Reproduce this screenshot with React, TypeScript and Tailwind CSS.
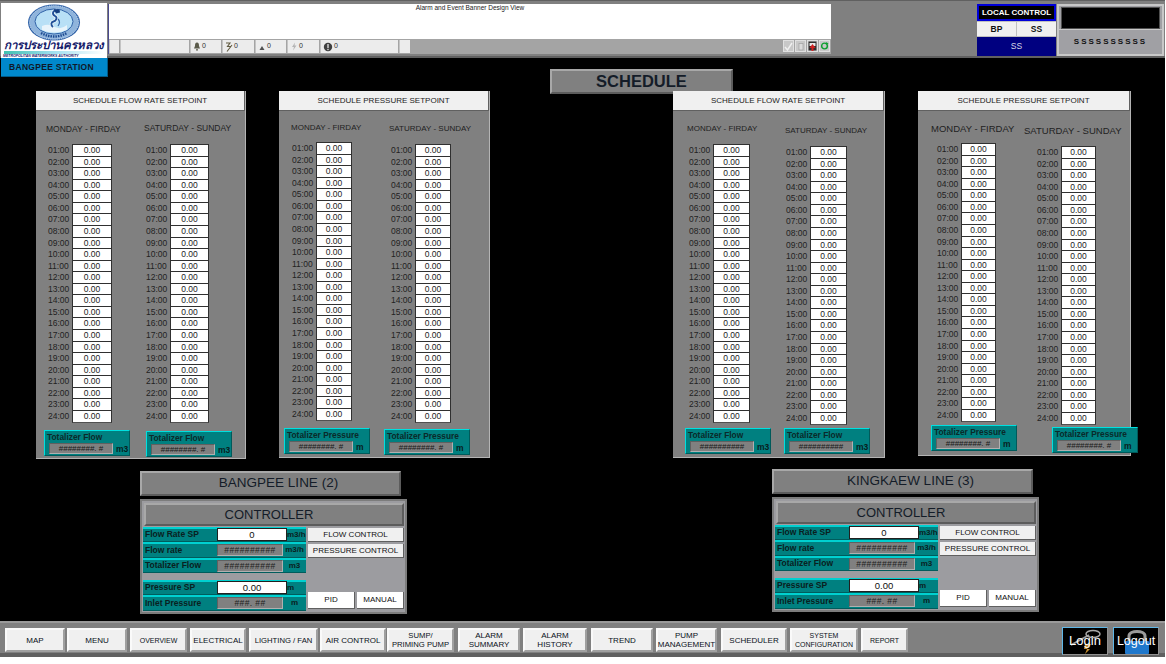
import React from "react";

const FONT = "font-['Liberation_Sans',Arial,sans-serif]";
const HOURS = Array.from({ length: 24 }, (_, i) => String(i + 1).padStart(2, "0") + ":00");

type Col = { box: string; labelCls: string; label: string; rows: string; input: string; tot: string; totLabel: string; value: string; unit: string };
type PanelCfg = { title: string; cls: string; cols: Col[] };

const FLOW = "Totalizer Flow";
const PRES = "Totalizer Pressure";
const MF = "MONDAY - FIRDAY";
const SS = "SATURDAY - SUNDAY";

const PANELS: PanelCfg[] = [
  {
    title: "SCHEDULE FLOW RATE SETPOINT",
    cls: "ml-[36px] w-[210px] h-[368px]",
    cols: [
      { box: "w-[102px] pt-[13px]", labelCls: "ml-[10px] text-[8.5px]", label: MF, rows: "ml-[12px] mt-[9px]", input: "w-[40px]", tot: "ml-[8px] mt-[8px]", totLabel: FLOW, value: "########. #", unit: "m3" },
      { box: "w-[108px] pt-[12px]", labelCls: "ml-[6px] text-[8.5px]", label: SS, rows: "ml-[8px] mt-[10px]", input: "w-[39px]", tot: "ml-[8px] mt-[9px]", totLabel: FLOW, value: "########. #", unit: "m3" },
    ],
  },
  {
    title: "SCHEDULE PRESSURE SETPOINT",
    cls: "ml-[33px] w-[211px] h-[367px]",
    cols: [
      { box: "w-[98px] pt-[12px]", labelCls: "ml-[12px] text-[8px]", label: MF, rows: "ml-[13px] mt-[8px]", input: "w-[36px]", tot: "ml-[5px] mt-[8px]", totLabel: PRES, value: "########. #", unit: "m" },
      { box: "w-[113px] pt-[13px]", labelCls: "ml-[12px] text-[8px]", label: SS, rows: "ml-[14px] mt-[9px]", input: "w-[36px]", tot: "ml-[7px] mt-[7px]", totLabel: PRES, value: "########. #", unit: "m" },
    ],
  },
  {
    title: "SCHEDULE FLOW RATE SETPOINT",
    cls: "ml-[183px] w-[212px] h-[367px]",
    cols: [
      { box: "w-[100px] pt-[13px]", labelCls: "ml-[14px] text-[8px]", label: MF, rows: "ml-[16px] mt-[9px]", input: "w-[37px]", tot: "ml-[12px] mt-[6px]", totLabel: FLOW, value: "##########", unit: "m3" },
      { box: "w-[112px] pt-[15px]", labelCls: "ml-[12px] text-[8px]", label: SS, rows: "ml-[13px] mt-[9px]", input: "w-[37px]", tot: "ml-[11px] mt-[4px]", totLabel: FLOW, value: "##########", unit: "m3" },
    ],
  },
  {
    title: "SCHEDULE PRESSURE SETPOINT",
    cls: "ml-[33px] w-[213px] h-[365px]",
    cols: [
      { box: "w-[100px] pt-[13px]", labelCls: "ml-[13px] text-[9.5px]", label: MF, rows: "ml-[19px] mt-[8px]", input: "w-[35px]", tot: "ml-[13px] mt-[4px]", totLabel: PRES, value: "########. #", unit: "m" },
      { box: "w-[113px] pt-[15px]", labelCls: "ml-[6px] text-[9.5px]", label: SS, rows: "ml-[19px] mt-[9px]", input: "w-[35px]", tot: "ml-[34px] mt-[3px]", totLabel: PRES, value: "########. #", unit: "m" },
    ],
  },
];

function Totalizer({ c }: { c: Col }) {
  return (
    <div className={`${c.tot} w-[86px] h-[26px] shrink-0 bg-[#008080] border border-t-[#00e0e0] border-l-[#00e0e0] border-r-[#005a5a] border-b-[#005a5a] flex flex-col`}>
      <div className="h-[12px] pl-[2px] text-[8.4px] font-bold leading-[12px] text-[#0a2a2a] whitespace-nowrap">{c.totLabel}</div>
      <div className="flex items-center">
        <div className="ml-[4px] w-[64px] h-[11px] bg-[#808080] border border-t-[#606060] border-l-[#606060] border-r-[#b0b0b0] border-b-[#b0b0b0] text-[8px] leading-[9px] text-center text-[#181818] whitespace-nowrap overflow-hidden">{c.value}</div>
        <div className="ml-[3px] text-[8.5px] font-semibold text-[#082020]">{c.unit}</div>
      </div>
    </div>
  );
}

function Column({ c }: { c: Col }) {
  return (
    <div className={`${c.box} flex flex-col shrink-0`}>
      <div className={`${c.labelCls} h-[12px] leading-[12px] text-[#222222] whitespace-nowrap`}>{c.label}</div>
      <div className={`${c.rows} h-[277.5px] flex flex-col`}>
        {HOURS.map((h) => (
          <div key={h} className="flex-1 flex items-stretch min-h-0">
            <div className="w-[24px] text-[8.5px] leading-[13px] text-[#222222] text-left">{h}</div>
            <div className={`${c.input} bg-white border border-[#303030] border-b-[#505050] -mb-[1px] text-[8.5px] leading-[11px] text-center text-[#222222]`}>0.00</div>
          </div>
        ))}
      </div>
      <Totalizer c={c} />
    </div>
  );
}

function Panel({ p }: { p: PanelCfg }) {
  return (
    <div className={`${p.cls} shrink-0 flex flex-col bg-[#808080] border-r border-b border-[#b4b4b4]`}>
      <div className="h-[20px] -mb-[1px] shrink-0 bg-[#f0f0f0] border-b border-r border-[#606060] text-[8px] leading-[20px] text-center text-[#222222]">{p.title}</div>
      <div className="flex">
        {p.cols.map((c) => (
          <Column key={c.box + c.label} c={c} />
        ))}
      </div>
    </div>
  );
}

function Plate({ cls, text }: { cls: string; text: string }) {
  return (
    <div className={`${cls} bg-[#808080] border-2 border-t-[#a8a8a8] border-l-[#a8a8a8] border-r-[#5c5c5c] border-b-[#5c5c5c] flex items-center justify-center text-[#141c28]`}>{text}</div>
  );
}

function TealRow({ label, input, value, unit, cls }: { label: string; input?: string; value?: string; unit: string; cls: string }) {
  return (
    <div className={`${cls} flex items-center bg-[#008080] border-t-2 border-t-[#00d0d0] border-b border-b-[#005c5c] pb-[1px] text-[8.5px] font-bold text-[#0a2020]`}>
      <div className="w-[74px] pl-[2px] whitespace-nowrap">{label}</div>
      {input ? (
        <div className="w-[70px] h-[13px] bg-white border border-[#202020] text-[9.5px] font-normal text-center leading-[11px] text-[#101010]">{input}</div>
      ) : (
        <div className="w-[66px] h-[12px] bg-[#808080] border border-t-[#606060] border-l-[#606060] border-r-[#b0b0b0] border-b-[#b0b0b0] text-[8.5px] font-normal text-center leading-[10px] tracking-[0.4px] text-[#202020] whitespace-nowrap overflow-hidden">{value}</div>
      )}
      <div className={input ? "ml-0 text-[8px]" : "flex-1 text-center text-[8px]"}>{unit}</div>
    </div>
  );
}

function LightBtn({ cls, text }: { cls: string; text: string }) {
  return (
    <div className={`${cls} flex items-center justify-center text-[8px] text-[#101010] whitespace-nowrap border-r border-b border-[#606060]`}>{text}</div>
  );
}

function Controller({ cls }: { cls: string }) {
  return (
    <div className={`${cls} h-[115px] bg-[#9c9ca0] border-2 border-[#7c7c7c] flex flex-col pl-[1px] pt-[2px]`}>
      <Plate cls="ml-[1px] w-[260px] h-[23px] text-[13px] pr-[10px]" text="CONTROLLER" />
      <div className="flex mt-[1px]">
        <div className="w-[163px] flex flex-col">
          <TealRow cls="h-[15px]" label="Flow Rate SP" input="0" unit="m3/h" />
          <TealRow cls="h-[16px]" label="Flow rate" value="##########" unit="m3/h" />
          <TealRow cls="h-[15px]" label="Totalizer Flow" value="##########" unit="m3" />
          <div className="h-[7px]" />
          <TealRow cls="h-[15px]" label="Pressure SP" input="0.00" unit="m" />
          <TealRow cls="h-[16px]" label="Inlet Pressure" value="###. ##" unit="m" />
        </div>
        <div className="ml-[2px] w-[96px] flex flex-col">
          <LightBtn cls="mt-[1px] h-[14px] bg-[#f0f0f0]" text="FLOW CONTROL" />
          <LightBtn cls="mt-[2px] h-[14px] bg-[#f0f0f0]" text="PRESSURE CONTROL" />
          <div className="mt-[34px] flex gap-[2px]">
            <LightBtn cls="w-[47px] h-[17px] bg-white" text="PID" />
            <LightBtn cls="w-[47px] h-[17px] bg-white" text="MANUAL" />
          </div>
        </div>
      </div>
    </div>
  );
}

function Seal() {
  return (
    <svg width="54" height="37" viewBox="0 0 54 37" className="block">
      <ellipse cx="27" cy="18.5" rx="26" ry="18" fill="#2f62a8" />
      <ellipse cx="27" cy="18.5" rx="24.5" ry="16.8" fill="#8fb4dc" stroke="#dfeaf6" strokeWidth="0.8" strokeDasharray="1.2 1" />
      <ellipse cx="27" cy="17.5" rx="19" ry="12.5" fill="#b8e0f6" stroke="#2f62a8" strokeWidth="1" />
      <path d="M14 29 Q27 36 40 29" fill="none" stroke="#1d4a90" strokeWidth="2.4" strokeDasharray="1.5 1" />
      <path d="M15 22 Q22 19 28 23 Q34 26 40 21 L40 26 Q27 31 15 26Z" fill="#e8f4fb" />
      <path d="M30 6.5 C25 6.5 25 10.5 28 12 C31 13.5 29 17 26.5 17.5 C24 18 23.5 21 26 23" fill="none" stroke="#e8f4fb" strokeWidth="3.6" />
      <path d="M30 6.5 C25 6.5 25 10.5 28 12 C31 13.5 29 17 26.5 17.5 C24 18 23.5 21 26 23" fill="none" stroke="#1f4f98" strokeWidth="1.8" />
      <path d="M26.5 5 L32.5 5.5 L33 8.5 L29 9.5 Z" fill="#153e80" />
      <path d="M31 15 Q34 18 31 22" fill="none" stroke="#2f62a8" strokeWidth="1.2" />
    </svg>
  );
}

function Logo() {
  return (
    <div className="w-[106px] h-[55px] bg-white flex flex-col items-center overflow-hidden">
      <div className="mt-[1px]"><Seal /></div>
      <div className="w-full h-[9px] text-[11.5px] leading-[8px] font-bold italic text-center text-[#16206a] whitespace-nowrap font-['Noto_Sans','DejaVu_Sans',sans-serif]">การประปานครหลวง</div>
      <div className="w-[100px] h-[3px] mt-[1px] bg-[linear-gradient(90deg,#40c0b0,#a0e0f0,#ffffff)]" />
      <div className="w-full text-[3.5px] leading-[4px] pl-[2px] font-bold italic text-[#16206a] whitespace-nowrap">METROPOLITAN WATERWORKS AUTHORITY</div>
    </div>
  );
}

function StatusCell({ cls, icon, n }: { cls: string; icon?: React.ReactNode; n?: string }) {
  return (
    <div className={`${cls} h-full bg-[#ececec] border-l border-[#c4c4c4] flex items-center text-[7px] text-[#303030]`}>
      {icon && <span className="ml-[2px] mr-[1px] flex">{icon}</span>}
      {n}
    </div>
  );
}

const BellIcon = (
  <svg width="8" height="9" viewBox="0 0 8 9"><path d="M4 0.5 C2.4 0.5 2 2 2 4 L1 6.5 H7 L6 4 C6 2 5.6 0.5 4 0.5Z M3 7.2 H5 V8.4 H3Z" fill="#5a5a4a" /></svg>
);
const AckIcon = (
  <svg width="8" height="10" viewBox="0 0 8 10"><path d="M1 1 H5 L2.5 4.5 H6 M7 3 L2 9.5" fill="none" stroke="#605a40" strokeWidth="1.1" /></svg>
);
const TriIcon = (
  <svg width="8" height="9" viewBox="0 0 8 9"><path d="M4 4 L6.5 8 H1.5Z" fill="#505050" /></svg>
);
const BoltIcon = (
  <svg width="8" height="9" viewBox="0 0 8 9"><path d="M5 0.5 L2 5 H4 L3 8.5 L6.5 3.5 H4.5Z" fill="#b4b4b4" /></svg>
);
const DiscIcon = (
  <svg width="10" height="10" viewBox="0 0 10 10"><circle cx="5" cy="5" r="4.2" fill="#404040" /><rect x="4.2" y="2" width="1.6" height="4" fill="#c8c8c8" /><rect x="4.2" y="6.8" width="1.6" height="1.3" fill="#c8c8c8" /></svg>
);

function ToolIcon({ children }: { children: React.ReactNode }) {
  return <div className="w-[11px] h-[12px] bg-[#c8c8c8] border border-[#e0e0e0] flex items-center justify-center">{children}</div>;
}

function Header() {
  return (
    <div className="h-[58px] bg-[#808080] flex pt-[2px] border-t border-t-[#606060] border-b-2 border-b-[#606060]">
      <div className="ml-[1px] h-[55px]"><Logo /></div>
      <div className="ml-[1px] mt-[1px] w-[723px] h-[50px] bg-[#a4a4a4] flex flex-col border-l border-[#4a4a90]">
        <div className="h-[35px] bg-white text-[6.5px] text-center leading-[8px] text-[#222222]">Alarm and Event Banner Design View</div>
        <div className="h-[13px] mt-[1px] flex items-stretch">
          <StatusCell cls="w-[10px]" />
          <StatusCell cls="ml-[1px] w-[69px]" />
          <StatusCell cls="ml-[1px] w-[31px]" icon={BellIcon} n="0" />
          <StatusCell cls="ml-[1px] w-[32px]" icon={AckIcon} n="0" />
          <StatusCell cls="ml-[1px] w-[31px]" icon={TriIcon} n="0" />
          <StatusCell cls="ml-[1px] w-[32px]" icon={BoltIcon} n="0" />
          <StatusCell cls="ml-[1px] w-[78px]" icon={DiscIcon} n="0" />
          <StatusCell cls="ml-[1px] w-[11px]" />
          <div className="flex-1" />
          <div className="flex gap-[1px] pr-[1px]">
            <ToolIcon>
              <svg width="9" height="9" viewBox="0 0 9 9"><path d="M1 5 L3.5 8 L8 1" fill="none" stroke="#f0f0f0" strokeWidth="1.4" /></svg>
            </ToolIcon>
            <ToolIcon>
              <svg width="8" height="9" viewBox="0 0 8 9"><rect x="2" y="1.5" width="4" height="6.5" fill="#dcdcdc" stroke="#a0a0a0" strokeWidth="0.7" /></svg>
            </ToolIcon>
            <ToolIcon>
              <svg width="9" height="10" viewBox="0 0 9 10"><rect x="0.5" y="0.5" width="8" height="9" fill="#303030" /><rect x="1.5" y="2" width="6" height="3" fill="#e8e8e8" /><path d="M4.5 3 L7.5 7 H5.5 V10 H3.5 V7 H1.5Z" fill="#d02020" /></svg>
            </ToolIcon>
            <ToolIcon>
              <svg width="10" height="10" viewBox="0 0 10 10"><circle cx="5" cy="5" r="3.2" fill="none" stroke="#10a030" strokeWidth="1.6" /><path d="M7 0.5 L9.5 2.5 L6.5 3.5Z" fill="#10a030" /></svg>
            </ToolIcon>
          </div>
        </div>
      </div>
      <div className="ml-[146px] mt-[1px] w-[79px] h-[52px] flex flex-col bg-[#c0c0c0]">
        <div className="h-[17px] bg-black border-2 border-[#0000d8] text-[8px] font-bold leading-[13px] text-center text-white whitespace-nowrap">LOCAL CONTROL</div>
        <div className="h-[14px] mt-[1px] flex gap-[1px]">
          <div className="flex-1 bg-[#f0f0f0] text-[8.5px] font-bold text-center leading-[14px] text-[#101010]">BP</div>
          <div className="flex-1 bg-[#f0f0f0] text-[8.5px] font-bold text-center leading-[14px] text-[#101010]">SS</div>
        </div>
        <div className="flex-1 mt-[1px] bg-[#000080] text-[8.5px] text-center leading-[19px] text-[#d8d8e8]">SS</div>
      </div>
      <div className="ml-[1px] mt-[1px] w-[107px] h-[52px] bg-[#a0a0a4] border-2 border-[#c8c8c8] flex flex-col">
        <div className="h-[22px] mx-[2px] mt-[1px] bg-black border border-[#505050]" />
        <div className="flex-1 flex items-center justify-center text-[8px] font-bold tracking-[2px] text-[#101010] whitespace-nowrap border-t border-[#c8c8c8]">SSSSSSSSSS</div>
      </div>
    </div>
  );
}

const NAV: { cls: string; text: React.ReactNode; size: string }[] = [
  { cls: "ml-[5px] w-[60px]", text: "MAP", size: "text-[8px]" },
  { cls: "ml-[2px] w-[60px]", text: "MENU", size: "text-[8px]" },
  { cls: "ml-[3px] w-[57px]", text: "OVERVIEW", size: "text-[7px]" },
  { cls: "ml-[3px] w-[56px]", text: "ELECTRICAL", size: "text-[8px]" },
  { cls: "ml-[3px] w-[69px]", text: "LIGHTING / FAN", size: "text-[7.7px]" },
  { cls: "ml-[2px] w-[66px]", text: "AIR CONTROL", size: "text-[8px]" },
  { cls: "ml-[1px] w-[67px]", text: <>SUMP/<br />PRIMING PUMP</>, size: "text-[7.7px]" },
  { cls: "ml-[4px] w-[62px]", text: <>ALARM<br />SUMMARY</>, size: "text-[8px]" },
  { cls: "ml-[3px] w-[64px]", text: <>ALARM<br />HISTORY</>, size: "text-[8px]" },
  { cls: "ml-[4px] w-[62px]", text: "TREND", size: "text-[8px]" },
  { cls: "ml-[3px] w-[61px]", text: <>PUMP<br />MANAGEMENT</>, size: "text-[8px]" },
  { cls: "ml-[4px] w-[66px]", text: "SCHEDULER", size: "text-[8px]" },
  { cls: "ml-[3px] w-[68px]", text: <>SYSTEM<br />CONFIGURATION</>, size: "text-[7px]" },
  { cls: "ml-[3px] w-[47px]", text: "REPORT", size: "text-[7px]" },
];

function NavBar() {
  return (
    <div className="h-[36px] bg-[#808080] border-t-2 border-t-[#9a9a9a] border-b-4 border-b-[#606060] flex items-start pt-[5px]">
      {NAV.map((n, i) => (
        <div key={i} className={`${n.cls} ${n.size} h-[24px] shrink-0 bg-[#f0f0f0] border-2 border-t-[#fafafa] border-l-[#fafafa] border-r-[#a0a0a0] border-b-[#a0a0a0] flex items-center justify-center text-center leading-[9px] text-[#0a1020] whitespace-nowrap`}>{n.text}</div>
      ))}
      <div className="ml-[154px] -mt-[1px] w-[46px] h-[28px] bg-black border border-t-[#60b8e8] border-l-[#60b8e8] border-r-[#909090] border-b-[#909090] relative flex items-center justify-center overflow-hidden">
        <svg width="40" height="26" viewBox="0 0 40 26" className="absolute left-[2px] top-0">
          <path d="M6 17 L24 7" stroke="#9a9a9a" strokeWidth="2" />
          <ellipse cx="28" cy="6" rx="7" ry="3.5" fill="none" stroke="#a8a8a8" strokeWidth="1.5" />
          <path d="M20 16 L26 16 L22 21 L25 21 L20 26 L22 21 L19 21Z" fill="#c89030" />
        </svg>
        <span className="relative text-[13px] text-white">Login</span>
      </div>
      <div className="ml-[5px] -mt-[1px] w-[46px] h-[28px] bg-black border border-t-[#60b8e8] border-l-[#60b8e8] border-r-[#909090] border-b-[#909090] relative flex items-center justify-center overflow-hidden">
        <svg width="32" height="26" viewBox="0 0 32 26" className="absolute left-[7px] top-0">
          <path d="M8 13 V8 C8 2 24 2 24 8 V13" fill="none" stroke="#9a9a9a" strokeWidth="3" />
          <rect x="4" y="13" width="24" height="13" rx="1" fill="#1f78cc" />
        </svg>
        <span className="relative text-[12.5px] text-white">Logout</span>
      </div>
    </div>
  );
}

export default function App() {
  return (
    <div className={`${FONT} w-[1166px] h-[664px] bg-white overflow-hidden flex flex-col`}>
      <div className="w-[1165px] h-[657px] flex flex-col">
        <Header />
        <div className="h-[563px] shrink-0 bg-black flex flex-col overflow-hidden">
          <div className="ml-[1px] w-[107px] h-[19px] shrink-0 bg-[#0088cc] border-r border-b border-[#005a88] text-[8.5px] font-bold tracking-[0.3px] leading-[19px] text-center text-[#101828] pr-[5px]">BANGPEE STATION</div>
          <Plate cls="-mt-[8px] ml-[550px] w-[183px] h-[25px] shrink-0 text-[16.5px] font-bold" text="SCHEDULE" />
          <div className="flex -mt-[3px] h-[368px] shrink-0 items-start">
            {PANELS.map((p, i) => (
              <Panel key={i} p={p} />
            ))}
          </div>
          <div className="flex items-start">
            <div className="ml-[140px] mt-[12px] w-[267px] shrink-0 flex flex-col">
              <Plate cls="w-[261px] h-[25px] text-[13.5px] pl-[16px]" text="BANGPEE LINE (2)" />
              <Controller cls="mt-[3px] w-[267px]" />
            </div>
            <div className="ml-[365px] mt-[10px] w-[267px] shrink-0 flex flex-col">
              <Plate cls="w-[261px] h-[25px] text-[13.5px] pl-[16px]" text="KINGKAEW LINE (3)" />
              <Controller cls="mt-[3px] w-[267px]" />
            </div>
          </div>
        </div>
        <NavBar />
      </div>
    </div>
  );
}
